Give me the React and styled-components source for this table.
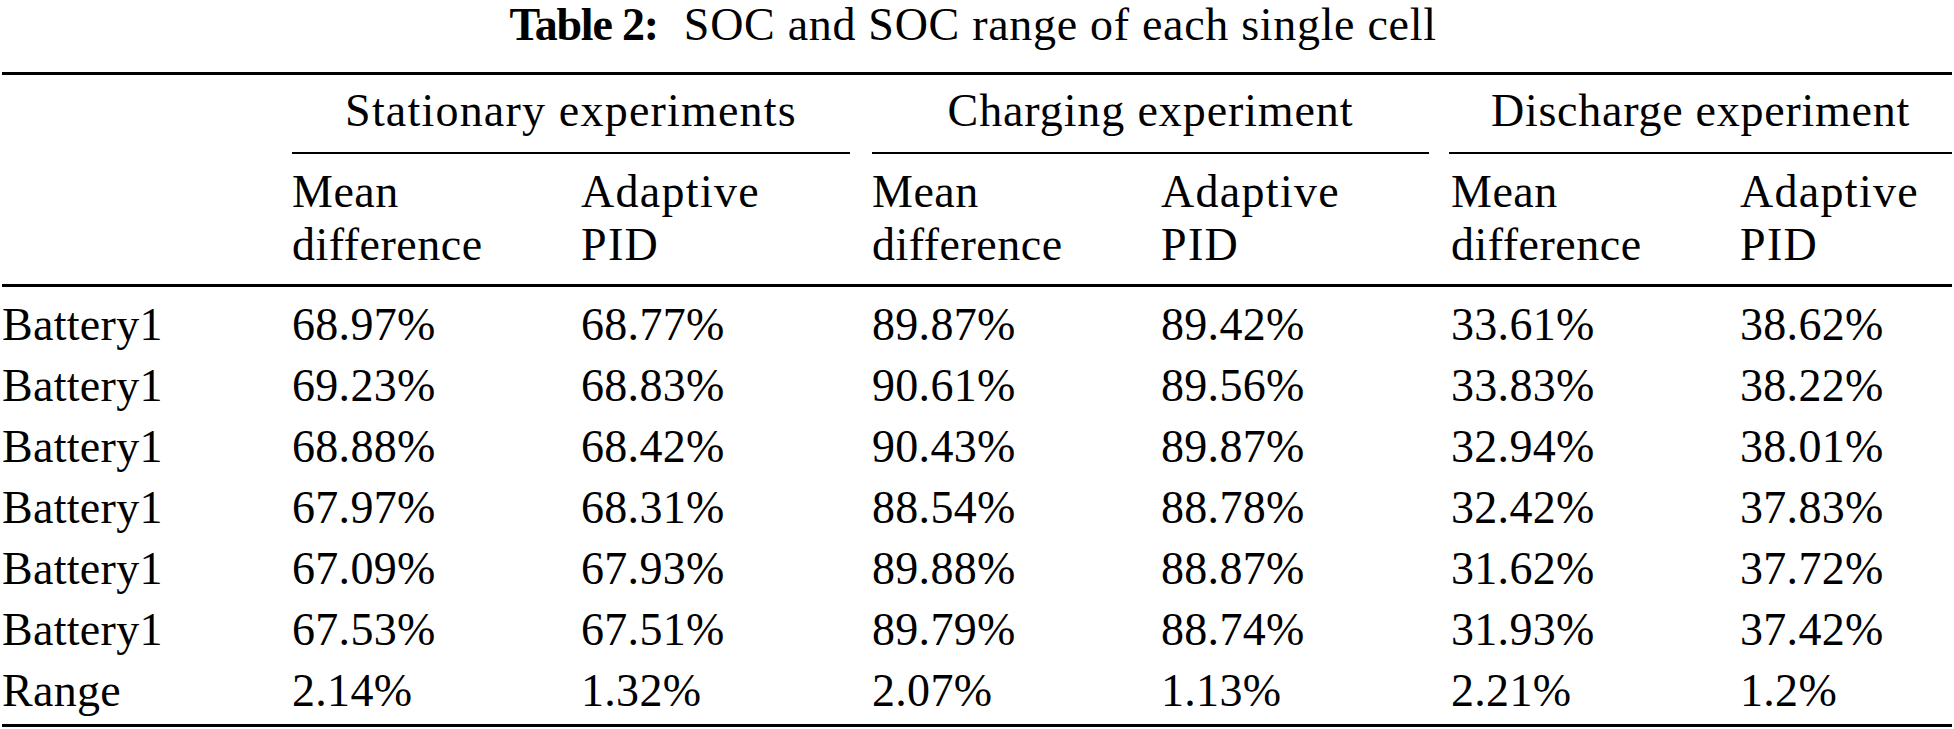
import React from "react";
import styled, { createGlobalStyle } from "styled-components";

const GlobalStyle = createGlobalStyle`
  html, body {
    margin: 0;
    padding: 0;
    background: #ffffff;
  }
  body {
    font-family: "Liberation Serif", "Times New Roman", serif;
    color: #000000;
  }
`;

const COLS = "290px 289px 291px 289px 290px 289px 1fr";

const Page = styled.div`
  width: 1954px;
  font-family: "Liberation Serif", "Times New Roman", serif;
  font-size: 46px;
  color: #000;
`;

const Caption = styled.div`
  height: 50px;
  line-height: 50px;
  text-align: center;
  white-space: nowrap;
  margin-bottom: 22px;
  padding-right: 8px;
  letter-spacing: 0.7px;
`;

const CaptionLabel = styled.span`
  font-weight: 700;
  letter-spacing: -1.2px;
`;

const CaptionText = styled.span`
  margin-left: 26px;
`;

const Table = styled.div`
  margin: 0 2px;
  border-top: 3px solid #000;
  border-bottom: 3px solid #000;
`;

const GroupRow = styled.div`
  display: grid;
  grid-template-columns: ${COLS};
`;

const GroupCell = styled.div`
  grid-column: ${(p) => p.$col} / span 2;
  padding-right: ${(p) => p.$trim}px;
  margin-left: ${(p) => p.$lead || 0}px;
`;

const GroupLabel = styled.div`
  line-height: 42px;
  padding: 15px 0 20px;
  text-align: center;
  white-space: nowrap;
  letter-spacing: ${(p) => p.$spacing}px;
  border-bottom: 2px solid #000;
`;

const HeadRow = styled.div`
  display: grid;
  grid-template-columns: ${COLS};
  padding: 11px 0 13px;
  border-bottom: 3px solid #000;
`;

const HeadCell = styled.div`
  line-height: 53px;
  white-space: nowrap;
  letter-spacing: ${(p) => p.$spacing || 0.5}px;
`;

const Body = styled.div`
  padding: 7px 0 3px;
`;

const Row = styled.div`
  display: grid;
  grid-template-columns: ${COLS};
  line-height: 61px;
`;

const Cell = styled.div`
  white-space: nowrap;
  letter-spacing: 0.3px;
`;

const groups = [
  { label: "Stationary experiments", col: 2, trim: 22, spacing: 1.2 },
  { label: "Charging experiment", col: 4, trim: 22, spacing: 0.9 },
  { label: "Discharge experiment", col: 6, trim: 0, lead: -2, spacing: 0.75 },
];

const rows = [
  ["Battery1", "68.97%", "68.77%", "89.87%", "89.42%", "33.61%", "38.62%"],
  ["Battery1", "69.23%", "68.83%", "90.61%", "89.56%", "33.83%", "38.22%"],
  ["Battery1", "68.88%", "68.42%", "90.43%", "89.87%", "32.94%", "38.01%"],
  ["Battery1", "67.97%", "68.31%", "88.54%", "88.78%", "32.42%", "37.83%"],
  ["Battery1", "67.09%", "67.93%", "89.88%", "88.87%", "31.62%", "37.72%"],
  ["Battery1", "67.53%", "67.51%", "89.79%", "88.74%", "31.93%", "37.42%"],
  ["Range", "2.14%", "1.32%", "2.07%", "1.13%", "2.21%", "1.2%"],
];

export default function App() {
  return (
    <>
      <GlobalStyle />
      <Page>
        <Caption>
          <CaptionLabel>Table 2:</CaptionLabel>
          <CaptionText>SOC and SOC range of each single cell</CaptionText>
        </Caption>
        <Table>
          <GroupRow>
            {groups.map((g) => (
              <GroupCell key={g.label} $col={g.col} $trim={g.trim} $lead={g.lead}>
                <GroupLabel $spacing={g.spacing}>{g.label}</GroupLabel>
              </GroupCell>
            ))}
          </GroupRow>
          <HeadRow>
            <HeadCell />
            {[0, 1, 2].map((i) => (
              <React.Fragment key={i}>
                <HeadCell>
                  Mean
                  <br />
                  difference
                </HeadCell>
                <HeadCell $spacing={1.3}>
                  Adaptive
                  <br />
                  PID
                </HeadCell>
              </React.Fragment>
            ))}
          </HeadRow>
          <Body>
            {rows.map((r, i) => (
              <Row key={i}>
                {r.map((c, j) => (
                  <Cell key={j}>{c}</Cell>
                ))}
              </Row>
            ))}
          </Body>
        </Table>
      </Page>
    </>
  );
}
